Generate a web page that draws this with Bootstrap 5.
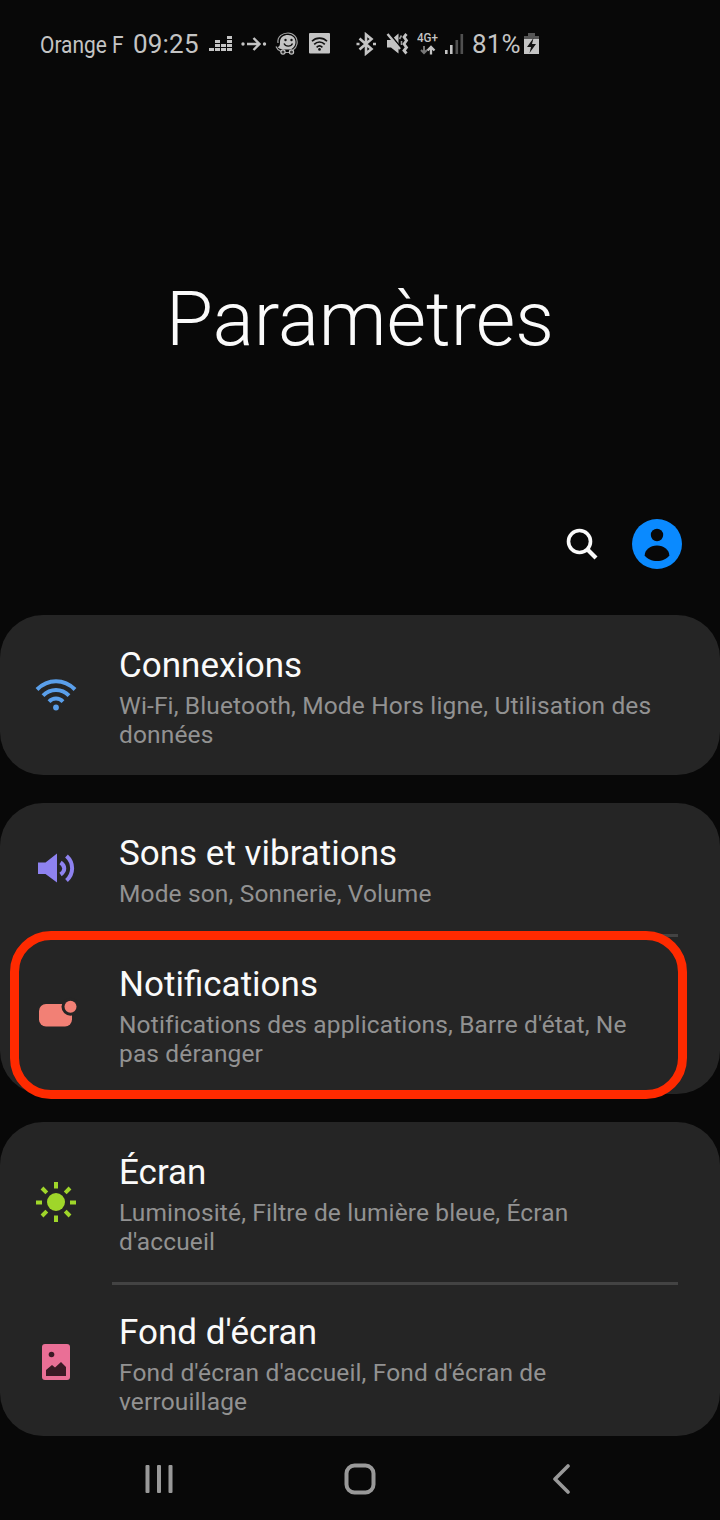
<!DOCTYPE html>
<html lang="fr">
<head>
<meta charset="utf-8">
<meta name="viewport" content="width=device-width, initial-scale=1">
<title>Paramètres</title>
<link href="https://cdn.jsdelivr.net/npm/bootstrap@5.3.0/dist/css/bootstrap.min.css" rel="stylesheet">
<style>
  body { background: #080808; color: #fafafa; font-family: Roboto, "Liberation Sans", sans-serif; height: 1520px; overflow: hidden; }
  body > * { flex-shrink: 0; }
  svg { display: block; flex: none; }
  .statusbar { height: 88px; padding-left: 40px; color: #c4c4c4; display: grid; align-items: center; align-content: center;
    grid-template-columns: 93px 76px 32px 34px 34px 47px 30px 31px 28px 27px 52px 16px; }
  .carrier { font-size: 23.5px; line-height: 28px; transform: scaleX(.89); transform-origin: 0 50%; padding-top: 2px; }
  .clock { font-size: 26px; line-height: 28px; letter-spacing: .2px; }
  .hero { height: 402px; padding-top: 186px; }
  .hero h1 { font-size: 76.4px; font-weight: 300; line-height: 90px; margin: 0; }
  .tools { height: 110px; padding: 0 38px 2px 0; gap: 34px; }
  .panels { margin-top: 15px; gap: 28px; }
  .panel { background: #252525; border-radius: 43px; }
  .entry { padding-left: 34px; position: relative; }
  .entry > svg { width: 44px; height: 44px; margin-right: 41px; }
  .entry > .texts { padding-top: 4px; }
  .entry h2 { font-size: 35px; font-weight: 400; line-height: 41px; margin: 0 0 5px; }
  .entry p { font-size: 24.5px; letter-spacing: .14px; line-height: 29px; color: #929292; margin: 0; }
  .rule { height: 3px; background: #434343; margin: 0 42px 0 112px; }
  .marker { position: absolute; left: 9.5px; right: 33px; top: -6px; bottom: -5px; border: 9px solid #ff2a00; border-radius: 41px; }
  .navkeys { height: 84px; padding: 2px 145px 0; }
</style>
</head>
<body class="d-flex flex-column">
<header class="statusbar text-nowrap">
  <span class="carrier">Orange F</span>
  <span class="clock">09:25</span>
  <svg width="24" height="16" fill="#c4c4c4"><path d="M0 12h5v3H0zM6 12h5v3H6zM12 12h5v3h-5zM18 12h5v3h-5zM6 8h5v3H6zM12 8h5v3h-5zM18 8h5v3h-5zM6 4h5v3H6zM18 4h5v3h-5zM18 0h5v3h-5z"/></svg>
  <svg width="26" height="16" fill="none" stroke="#c4c4c4" stroke-width="2.400"><path d="M6 8h12M12.500 2 18.500 8l-6 6"/><circle cx="2" cy="8" r="1.700" fill="#c4c4c4" stroke="none"/><circle cx="23.500" cy="8" r="1.700" fill="#c4c4c4" stroke="none"/></svg>
  <svg width="24" height="24"><path d="M2.500 15c2.500 0 2.500-3 2.500-5 0-4.500 3.500-7 8-7s7.500 3 7.500 7-2.500 7-6 7.500H8c-2.500-.500-4-1-5.500-2.500z" fill="#c4c4c4"/><path d="M3 11C2 4 8 1 13 1s10 4 9 11c-.500 3-2.500 5-4 6M1 14.500c1 3 3 4 5 5M10 20.500h4.500" fill="none" stroke="#a4a4a4" stroke-width="1.200"/><circle cx="10.500" cy="8" r="1.200" fill="#111"/><circle cx="16.500" cy="8" r="1.200" fill="#111"/><path d="M9 11.500c1.500 3.500 7 3.500 8.500 0" fill="none" stroke="#111" stroke-width="1.400"/><circle cx="8" cy="20" r="2.100" fill="#333" stroke="#c4c4c4" stroke-width="1.200"/><circle cx="16.500" cy="20" r="2.100" fill="#333" stroke="#c4c4c4" stroke-width="1.200"/></svg>
  <svg width="22" height="22"><rect y="0" width="21" height="20.500" rx="1" fill="#c4c4c4"/><g fill="none" stroke="#111" stroke-width="1.600"><path d="M3 8.300c4-4.300 11-4.300 15 0M5.200 11.400c3-3.200 7.600-3.200 10.600 0M7.600 14.300c2-1.900 3.800-1.900 5.800 0"/></g><circle cx="10.500" cy="16.400" r="1.300" fill="#111"/></svg>
  <svg width="20" height="24" fill="none" stroke="#c4c4c4" stroke-width="2.600"><path d="M3.500 6.500 15.500 17l-5.500 4.500v-19L15.500 7l-12 10.500"/><path d="M0.500 12h3M17 12h3"/></svg>
  <svg width="24" height="24"><path d="M1 8h4l7.500-6.500v20L5 15.500H1z" fill="#c4c4c4"/><path d="M3.500 1.500 14 14.500" stroke="#080808" stroke-width="1.800"/><path d="M1.500 2 14 17" stroke="#c4c4c4" stroke-width="2.400"/><path d="M15.500 3.500 13.500 7M15.500 9v4" stroke="#a0a0a0" stroke-width="1.600"/><path d="m20.500 2-2.500 3 2.500 3.500-2.500 3.500 2.500 3.500-2.500 3 2.500 3" fill="none" stroke="#c4c4c4" stroke-width="2.800"/></svg>
  <svg width="22" height="24"><text x="0" y="10" font-size="12" font-weight="500" fill="#c4c4c4" textLength="21" lengthAdjust="spacingAndGlyphs">4G+</text><path d="M7 14v7M4 18l3 3 3-3" fill="none" stroke="#777" stroke-width="2"/><path d="M14 22.500V15m-3.500 3.500L14 15l3.500 3.500" fill="none" stroke="#c4c4c4" stroke-width="2.300"/></svg>
  <svg width="20" height="22"><path d="M0 17h2.600v4H0zM5 12h2.600v9H5z" fill="#c4c4c4"/><path d="M10.500 7h2.600v14h-2.600zM15.500 1h2.600v20h-2.600z" fill="#505050"/></svg>
  <span class="clock">81%</span>
  <svg width="16" height="24"><path d="M4 1h7v4H4z" fill="#555"/><path d="M0 4h15v4H0z" fill="#555"/><path d="M0 7h15v15H0z" fill="#c4c4c4"/><path d="M9.500 6 3 15h4l-1.500 6L12 12H8z" fill="#111"/></svg>
</header>

<section class="hero text-center"><h1>Paramètres</h1></section>

<div class="tools d-flex justify-content-end align-items-center">
  <svg width="32" height="32" fill="none" stroke="#fafafa"><circle cx="13.500" cy="13.500" r="11" stroke-width="3.600"/><path d="m21.500 21.500 8.500 8.500" stroke-width="4.200"/></svg>
  <svg width="50" height="50"><circle cx="25" cy="25" r="25" fill="#0a8aff"/><circle cx="25" cy="16" r="6.200" fill="#080808"/><path d="M12.700 36.500C12.700 31 18 26.500 25 26.500S37.300 31 37.300 36.500C35 40 30 42 25 42s-10-2-12.300-5.500z" fill="#080808"/></svg>
</div>

<main class="panels d-flex flex-column">
  <section class="panel" style="height:160px">
    <div class="entry d-flex align-items-center h-100">
      <svg viewBox="0 0 44 44" fill="none" stroke="#5a9fea" stroke-width="4"><path d="M3 16.500c11-11 27-11 38 0M9 22.700c7.500-7.500 18.500-7.500 26 0M15 28.600c4-4 10-4 14 0"/><circle cx="22" cy="34.500" r="2.900" fill="#5a9fea" stroke="none"/></svg>
      <div class="texts"><h2>Connexions</h2><p>Wi-Fi, Bluetooth, Mode Hors ligne, Utilisation des<br>données</p></div>
    </div>
  </section>

  <section class="panel" style="height:291px">
    <div class="entry d-flex align-items-center" style="height:131px">
      <svg viewBox="0 0 44 44"><path d="M4 15.500h7.500L23 6.500v29l-11.500-8.500H4z" fill="#8e82f0"/><path d="M26.500 15.500c5 3.500 5 8.500 0 12M32.500 9c7.500 7 7.500 17.500 0 24.500" fill="none" stroke="#8e82f0" stroke-width="4"/></svg>
      <div class="texts"><h2>Sons et vibrations</h2><p>Mode son, Sonnerie, Volume</p></div>
    </div>
    <div class="rule"></div>
    <div class="entry d-flex align-items-center" style="height:157px">
      <svg viewBox="0 0 44 44"><rect x="5" y="10" width="33" height="22.500" rx="7" fill="#f28075"/><circle cx="36.500" cy="12.700" r="9" fill="#252525"/><circle cx="36.500" cy="12.700" r="6" fill="#f28075"/></svg>
      <div class="texts pt-0"><h2>Notifications</h2><p>Notifications des applications, Barre d'état, Ne<br>pas déranger</p></div>
      <div class="marker"></div>
    </div>
  </section>

  <section class="panel" style="height:314px">
    <div class="entry d-flex align-items-center" style="height:160px">
      <svg viewBox="0 0 44 44" stroke="#9fd62a" stroke-width="4"><circle cx="22" cy="22" r="9" fill="#9fd62a" stroke="none"/><path d="M22 2v6.500M22 35.500v6.500M2 22.500h6M36 22.500h6M8 8l4.800 4.800M31.200 31.200 36 36M8 36l4.800-4.800M31.200 12.800 36 8"/></svg>
      <div class="texts"><h2>Écran</h2><p>Luminosité, Filtre de lumière bleue, Écran<br>d'accueil</p></div>
    </div>
    <div class="rule"></div>
    <div class="entry d-flex align-items-center" style="height:153px">
      <svg viewBox="0 0 44 44"><rect x="8" y="4" width="28" height="36" rx="3" fill="#ea6f96"/><circle cx="17.500" cy="14.500" r="2.800" fill="#3a1a25"/><path d="M12 36v-6l6-5 3 2.500 6-5.500 5 5v9z" fill="#3a1a25"/></svg>
      <div class="texts"><h2>Fond d'écran</h2><p>Fond d'écran d'accueil, Fond d'écran de<br>verrouillage</p></div>
    </div>
  </section>
</main>

<nav class="navkeys d-flex justify-content-between align-items-center">
  <svg width="28" height="30" fill="#999"><rect x="0.500" y="1" width="4" height="28" rx="1"/><rect x="12" y="1" width="4" height="28" rx="1"/><rect x="23.500" y="1" width="4" height="28" rx="1"/></svg>
  <svg width="32" height="32"><rect x="2.500" y="2.500" width="27" height="27" rx="8" fill="none" stroke="#999" stroke-width="4"/></svg>
  <svg width="28" height="30" fill="none" stroke="#999" stroke-width="3.600" stroke-linecap="round" stroke-linejoin="round"><path d="M21 2 8 15l13 13"/></svg>
</nav>
<script src="https://cdn.jsdelivr.net/npm/bootstrap@5.3.0/dist/js/bootstrap.bundle.min.js"></script>
</body>
</html>
